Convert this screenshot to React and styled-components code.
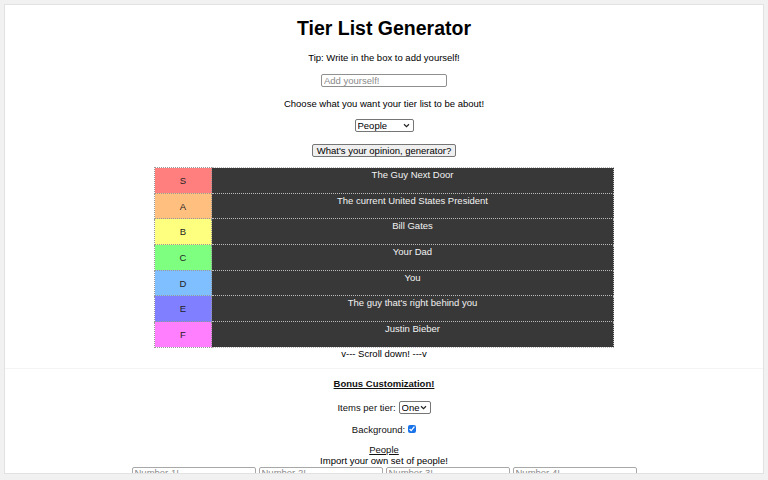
import styled, { createGlobalStyle } from "styled-components";

const GlobalStyle = createGlobalStyle`
  html, body {
    margin: 0;
    padding: 0;
    background: #f1f1f1;
  }
  body {
    font-family: "Liberation Sans", Arial, sans-serif;
    color: #111;
  }
`;

const TIERS = [
  { label: "S", color: "#ff7f7f", item: "The Guy Next Door" },
  { label: "A", color: "#ffbf7f", item: "The current United States President" },
  { label: "B", color: "#ffff7f", item: "Bill Gates" },
  { label: "C", color: "#7fff7f", item: "Your Dad" },
  { label: "D", color: "#7fbfff", item: "You" },
  { label: "E", color: "#7f7fff", item: "The guy that's right behind you" },
  { label: "F", color: "#ff7fff", item: "Justin Bieber" },
];

// small chevron for the selects (vector, not raster)
const CHEVRON =
  "data:image/svg+xml;utf8,<svg xmlns='http://www.w3.org/2000/svg' width='8' height='6' viewBox='0 0 8 6'><path d='M1 1.5 L4 4.5 L7 1.5' fill='none' stroke='%23222' stroke-width='1.4'/></svg>";

const App = () => {
  return (
    <>
      <GlobalStyle />
      <Window>
        <Title>Tier List Generator</Title>
        <Line $top={12}>Tip: Write in the box to add yourself!</Line>
        <TextInput $top={10} $width={126} placeholder="Add yourself!" />
        <Line $top={11}>Choose what you want your tier list to be about!</Line>
        <Select $top={9} $width="59px" defaultValue="people">
          <option value="people">People</option>
        </Select>
        <Button>What's your opinion, generator?</Button>
        <TierTable>
          <tbody>
            {TIERS.map((tier) => (
              <tr key={tier.label}>
                <LabelCell $color={tier.color}>{tier.label}</LabelCell>
                <ItemCell>{tier.item}</ItemCell>
              </tr>
            ))}
          </tbody>
        </TierTable>
        <Line $top={0}>v--- Scroll down! ---v</Line>
        <Bonus>
          <BonusTitle>Bonus Customization!</BonusTitle>
          <Row $top={11}>
            Items per tier:
            <Select $top={0} $width="32px" defaultValue="one">
              <option value="one">One</option>
            </Select>
          </Row>
          <Row $top={9}>
            Background:
            <Check type="checkbox" defaultChecked />
          </Row>
          <Underlined>People</Underlined>
          <Line $top={0}>Import your own set of people!</Line>
          <ImportRow>
            {[1, 2, 3, 4].map((n) => (
              <ImportInput key={n} $top={0} $width={124} placeholder={`Number ${n}!`} />
            ))}
          </ImportRow>
        </Bonus>
      </Window>
    </>
  );
};

export default App;

const Window = styled.div`
  margin: 4px;
  height: 470px;
  box-sizing: border-box;
  border: 1px solid #e2e2e2;
  background: #fff;
  overflow: hidden;
  display: flex;
  flex-direction: column;
  align-items: center;
`;

const Title = styled.h1`
  margin: 11px 0 0;
  font-size: 19.5px;
  line-height: 24px;
  font-weight: bold;
  color: #000;
`;

const Line = styled.div`
  margin-top: ${(p) => p.$top}px;
  font-size: 9.5px;
  line-height: 12px;
  color: #000;
`;

const TextInput = styled.input`
  margin-top: ${(p) => p.$top}px;
  width: ${(p) => p.$width}px;
  height: 15px;
  box-sizing: border-box;
  padding: 0 2px;
  border: 1px solid #8f8f8f;
  border-radius: 2px;
  font-family: "Liberation Sans", Arial, sans-serif;
  font-size: 9.5px;
  &::placeholder {
    color: #8a8a8a;
  }
`;

const ImportInput = styled(TextInput)`
  height: 16px;
  padding: 0 2px 4px;
  border-color: #a8a8a8;
`;

const Select = styled.select`
  margin-top: ${(p) => p.$top}px;
  width: ${(p) => p.$width};
  height: 13px;
  box-sizing: border-box;
  padding: 0 10px 0 2px;
  appearance: none;
  border: 1px solid #767676;
  border-radius: 2px;
  background: #fff url("${CHEVRON}") no-repeat right 3px center;
  background-size: 7px 5px;
  font-family: "Liberation Sans", Arial, sans-serif;
  font-size: 9.5px;
  line-height: 11px;
  color: #000;
`;

const Button = styled.button`
  margin-top: 12px;
  height: 15px;
  padding: 0 4px;
  box-sizing: border-box;
  white-space: nowrap;
  border: 1px solid #767676;
  border-radius: 2px;
  background: #efefef;
  font-family: "Liberation Sans", Arial, sans-serif;
  font-size: 9.5px;
  color: #000;
`;

const TierTable = styled.table`
  margin-top: 10px;
  width: 460px;
  border-collapse: collapse;
  border: 1px dotted #aaa;
  font-size: 9.5px;
`;

const LabelCell = styled.td`
  width: 57px;
  height: 25.7px;
  padding: 0;
  box-sizing: border-box;
  border: 1px dotted #999;
  background: ${(p) => p.$color};
  color: #222;
  text-align: center;
  vertical-align: middle;
`;

const ItemCell = styled.td`
  height: 25.7px;
  padding: 1px 0 0;
  box-sizing: border-box;
  border: 1px dotted #bbb;
  background: #383838;
  color: #f2f2f2;
  text-align: center;
  vertical-align: top;
  line-height: 12px;
`;

const Bonus = styled.section`
  margin-top: 8px;
  align-self: stretch;
  border-top: 1px solid #f4f4f4;
  display: flex;
  flex-direction: column;
  align-items: center;
`;

const BonusTitle = styled.div`
  margin-top: 9px;
  font-size: 9.5px;
  line-height: 12px;
  font-weight: bold;
  text-decoration: underline;
`;

const Row = styled.div`
  margin-top: ${(p) => p.$top}px;
  display: flex;
  align-items: center;
  gap: 3px;
  font-size: 9.5px;
  line-height: 13px;
  height: 13px;
`;

const Check = styled.input`
  margin: 0;
  width: 8px;
  height: 8px;
  accent-color: #1a73e8;
`;

const Underlined = styled.div`
  margin-top: 8px;
  font-size: 9.5px;
  line-height: 11px;
  text-decoration: underline;
`;

const ImportRow = styled.div`
  display: flex;
  gap: 3px;
`;
